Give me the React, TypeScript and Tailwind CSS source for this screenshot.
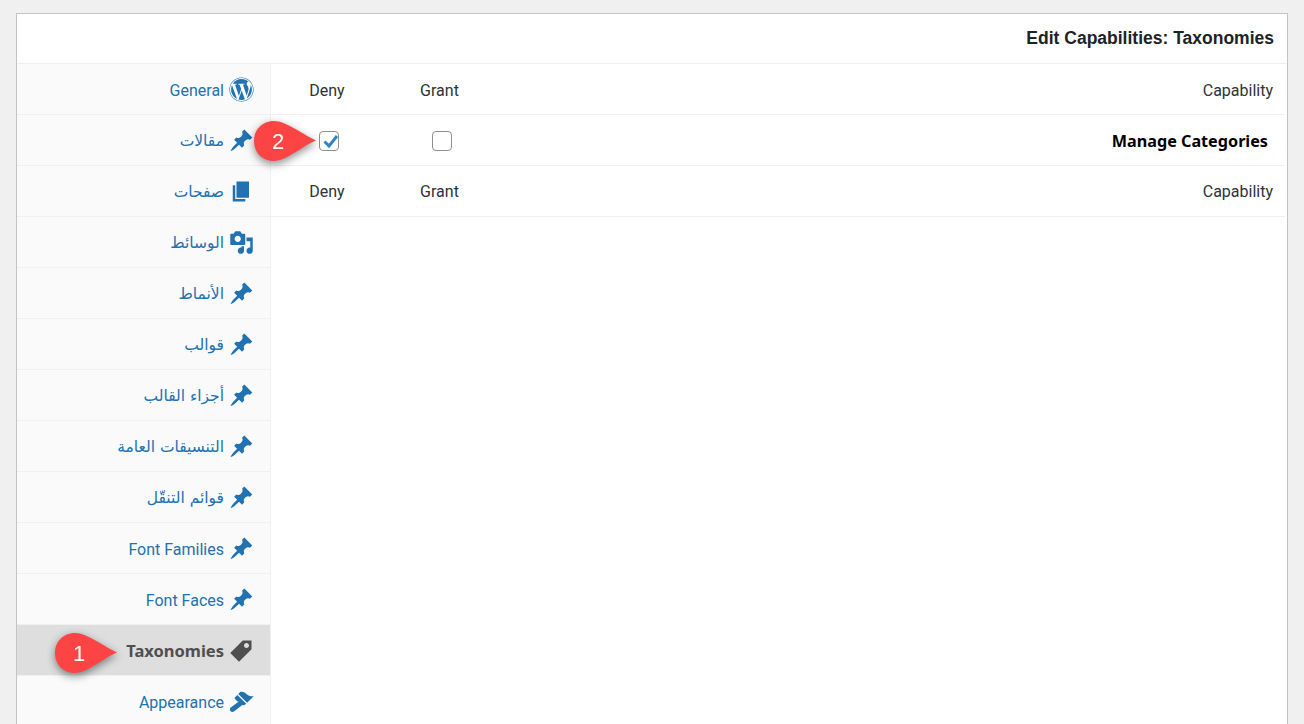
import React from "react";
import { FaWordpress } from "react-icons/fa";

const PIN =
  "M10.44 3.02l1.82-1.82 6.36 6.35-1.83 1.82c-1.05-.68-2.48-.57-3.41.36l-.75.75c-.92.93-1.04 2.35-.35 3.41l-1.83 1.82-2.41-2.41-2.8 2.79c-.42.42-3.38 2.71-3.8 2.29s1.86-3.39 2.28-3.81l2.79-2.79L4.1 9.36l1.83-1.82c1.05.69 2.48.57 3.4-.36l.75-.75c.93-.92 1.05-2.35.36-3.41z";
const PAGE = "M6 15V2h10v13H6zm-1 1h8v2H3V5h2v11z";
const MEDIA =
  "M13 11V4c0-.55-.45-1-1-1h-1.67L9 1H5L3.67 3H2c-.55 0-1 .45-1 1v7c0 .55.45 1 1 1h10c.55 0 1-.45 1-1zM7 4.5c1.38 0 2.5 1.12 2.5 2.5S8.38 9.5 7 9.5 4.5 8.38 4.5 7 5.62 4.5 7 4.5zM14 6h5v10.5c0 1.38-1.12 2.5-2.5 2.5S14 17.88 14 16.5s1.12-2.5 2.5-2.5c.17 0 .34.02.5.05V9h-3V6zm-4 8.05V13h2v3.5c0 1.38-1.12 2.5-2.5 2.5S7 17.88 7 16.5 8.12 14 9.5 14c.17 0 .34.02.5.05z";
const TAG =
  "M11 2h7v7L8 19l-7-7zm3 6c1.1 0 2-.9 2-2s-.9-2-2-2-2 .9-2 2 .9 2 2 2z";
const BRUSH =
  "M14.48 11.06L7.41 3.99l1.5-1.5c.5-.56 2.3-.47 3.51.32 1.21.8 1.43 1.28 2.91 2.1 1.18.64 2.45 1.26 4.45.85zm-.71.71L6.7 4.7 4.83 6.58c-.39.39-.39 1.02 0 1.41l1.77 1.77c.39.39 1.02.39 1.41 0l.1.1L1.4 14.8c-.9.7-.9 2-.1 2.9.8.8 2 .8 2.9 0l6.67-5.01.1.1c.39.39 1.02.39 1.41 0z";

type Item = { label: string; icon: string | null; active?: boolean; arabic?: boolean };

const items: Item[] = [
  { label: "General", icon: null },
  { label: "مقالات", icon: PIN, arabic: true },
  { label: "صفحات", icon: PAGE, arabic: true },
  { label: "الوسائط", icon: MEDIA, arabic: true },
  { label: "الأنماط", icon: PIN, arabic: true },
  { label: "قوالب", icon: PIN, arabic: true },
  { label: "أجزاء القالب", icon: PIN, arabic: true },
  { label: "التنسيقات العامة", icon: PIN, arabic: true },
  { label: "قوائم التنقّل", icon: PIN, arabic: true },
  { label: "Font Families", icon: PIN },
  { label: "Font Faces", icon: PIN },
  { label: "Taxonomies", icon: TAG, active: true },
  { label: "Appearance", icon: BRUSH },
];

const Dash = ({ d }: { d: string }) => (
  <svg viewBox="0 0 20 20" className="w-[25px] h-[25px] fill-current shrink-0">
    <path d={d} />
  </svg>
);

const SideItem = ({ item }: { item: Item }) => (
  <div
    className={
      "h-[51px] shrink-0 pt-px flex items-center justify-end gap-[5px] pr-4 border-b border-[#f0f0f1] " +
      (item.active ? "bg-[#dedede] text-[#4f4f4f]" : "text-[#2271b1]")
    }
  >
    <span
      className={
        "mt-0.5 " +
        (item.arabic
          ? "text-[15.5px] font-['DejaVu_Sans',sans-serif]"
          : item.active
            ? "text-[16.5px] font-bold font-['Noto_Sans',sans-serif]"
            : "text-[16px]")
      }
    >
      {item.label}
    </span>
    {item.icon ? (
      <Dash d={item.icon} />
    ) : (
      <span className="w-[25px] h-[25px] flex items-center justify-center">
        <FaWordpress size={25} />
      </span>
    )}
  </div>
);

const HeadRow = ({ className }: { className: string }) => (
  <div className={"h-[51px] flex items-center border-b border-[#f0f0f1] mr-0.5 text-[16px] text-[#2c3338] " + className}>
    <div className="w-[112px] text-center">Deny</div>
    <div className="w-[113px] text-center">Grant</div>
    <div className="flex-1 text-right pr-3">Capability</div>
  </div>
);

const Box = ({ checked }: { checked?: boolean }) => (
  <span className="w-5 h-5 rounded-[4px] border border-[#8c8f94] bg-white flex items-center justify-center">
    {checked && (
      <svg viewBox="0 0 20 20" className="w-5 h-5 shrink-0 fill-none stroke-[#3582c4] stroke-[3]">
        <path d="M5.5 10.5L10 15L18 5" />
      </svg>
    )}
  </span>
);

const Bubble = ({ n, className }: { n: string; className: string }) => (
  <div className={"absolute w-[62px] h-10 drop-shadow-[0_3px_4px_rgba(0,0,0,0.45)] " + className}>
    <svg viewBox="0 0 62 40" className="w-[62px] h-10 fill-[#fc4444]">
      <path d="M20 0C32 0 50 14 62 19.5 50 24 32 40 20 40 8 40 0 31 0 20 0 9 8 0 20 0z" />
    </svg>
    <span className="absolute left-[18px] top-[6px] text-[22px] leading-[30px] text-white font-['Liberation_Sans',sans-serif]">
      {n}
    </span>
  </div>
);

export default function App() {
  return (
    <div className="h-[724px] overflow-hidden bg-[#f0f0f1] pt-[13px] px-4 font-['Roboto',sans-serif]">
      <div className="relative h-[760px] bg-white border border-[#c3c4c7]">
        <div className="h-[50px] flex items-center justify-end pr-[13px] border-b border-[#f0f0f1] text-[17.5px] font-bold text-[#1d2327] font-['Liberation_Sans',sans-serif]">
          Edit Capabilities: Taxonomies
        </div>
        <div className="flex">
          <div className="w-[254px] shrink-0 flex flex-col bg-[#fafafa] border-r border-[#f0f0f1]">
            {items.map((item) => (
              <SideItem key={item.label} item={item} />
            ))}
          </div>
          <div className="flex-1 min-w-0">
            <HeadRow className="pt-[3px]" />
            <div className="h-[51px] flex items-center border-b border-[#f0f0f1] mr-0.5">
              <div className="w-[112px] pt-0.5 flex justify-center pl-1">
                <Box checked />
              </div>
              <div className="w-[113px] pt-0.5 flex justify-center pl-[5px]">
                <Box />
              </div>
              <div className="flex-1 pt-0.5 text-right pr-[17px] text-[16.2px] font-bold text-black font-['Noto_Sans',sans-serif]">
                Manage Categories
              </div>
            </div>
            <HeadRow className="pt-px" />
          </div>
        </div>
        <Bubble n="2" className="left-[237px] top-[107px]" />
        <Bubble n="1" className="left-[38px] top-[619px]" />
      </div>
    </div>
  );
}
